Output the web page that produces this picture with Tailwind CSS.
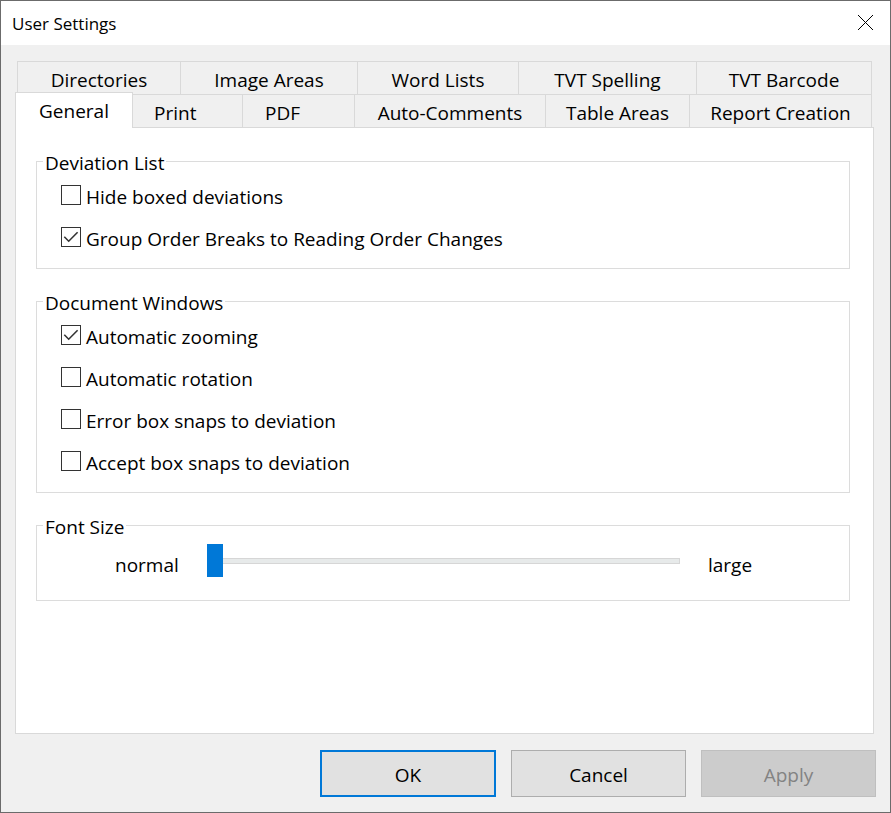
<!DOCTYPE html>
<html lang="en">
<head>
<meta charset="utf-8">
<title>User Settings</title>
<script src="https://cdn.jsdelivr.net/npm/@tailwindcss/browser@4"></script>
</head>
<body class="bg-[#f0f0f0] text-black font-['Open_Sans','Noto_Sans',sans-serif] text-[19px] leading-[26px]">
<div class="flex min-h-screen flex-col border border-[#6b6b6b]">
  <header class="flex h-11 items-center justify-between bg-white pl-[11px] pr-4">
    <h1 class="pt-[2px] text-[17px]">User Settings</h1>
    <button type="button" aria-label="Close" class="size-4">
      <svg viewBox="0 0 16 16" class="size-4" fill="none" stroke="#000" stroke-width="1"><path d="M0 0l15 15M15 0l-15 15"/></svg>
    </button>
  </header>

  <main class="flex flex-1 flex-col px-[14px] pt-4 pb-[15px]">
    <div role="tablist" aria-label="Settings pages" class="mr-1">
      <div class="ml-[2px] grid h-[33px] grid-cols-[163fr_177fr_161fr_178fr_175fr] border-r border-[#d9d9d9]">
        <button type="button" role="tab" class="border-t border-l border-[#d9d9d9] pt-1">Directories</button>
        <button type="button" role="tab" class="border-t border-l border-[#d9d9d9] pt-1">Image Areas</button>
        <button type="button" role="tab" class="border-t border-l border-[#d9d9d9] pt-1">Word Lists</button>
        <button type="button" role="tab" class="border-t border-l border-[#d9d9d9] pt-1">TVT Spelling</button>
        <button type="button" role="tab" class="border-t border-l border-[#d9d9d9] pt-1">TVT Barcode</button>
      </div>
      <div class="grid h-[33px] grid-cols-[118fr_109fr_112fr_191fr_144fr_182fr] border-r border-[#d9d9d9]">
        <button type="button" role="tab" aria-selected="true" aria-controls="general" class="z-10 -mt-[2px] -mb-px border-x border-t border-[#d9d9d9] bg-white pt-px">General</button>
        <button type="button" role="tab" class="border-t border-[#d9d9d9] pt-1 pl-[21px] text-left">Print</button>
        <button type="button" role="tab" class="border-t border-l border-[#d9d9d9] pt-1 pl-[22px] text-left">PDF</button>
        <button type="button" role="tab" class="border-t border-l border-[#d9d9d9] pt-1">Auto-Comments</button>
        <button type="button" role="tab" class="border-t border-l border-[#d9d9d9] pt-1">Table Areas</button>
        <button type="button" role="tab" class="border-t border-l border-[#d9d9d9] pt-1">Report Creation</button>
      </div>
    </div>

    <section id="general" role="tabpanel" aria-label="General" class="mr-[2px] flex flex-1 flex-col gap-[19px] border border-[#d9d9d9] bg-white pt-5 pr-[23px] pl-5">
      <fieldset class="border border-[#dcdcdc] pb-[10px] pl-6">
        <legend class="-ml-[18px] px-[2px] pt-1 leading-[22px]">Deviation List</legend>
        <label class="flex h-[42px] items-center gap-[5px]">
          <span class="grid"><input type="checkbox" class="peer col-start-1 row-start-1 size-5 appearance-none border border-[#333] bg-white"><svg viewBox="0 0 20 20" class="pointer-events-none col-start-1 row-start-1 hidden size-5 peer-checked:block" fill="none" stroke="#333" stroke-width="1.6"><path d="M3.300 9.800L7.700 14.200L16.600 5.300"/></svg></span>
          <span class="pt-[3px]">Hide boxed deviations</span>
        </label>
        <label class="flex h-[42px] items-center gap-[5px]">
          <span class="grid"><input type="checkbox" checked class="peer col-start-1 row-start-1 size-5 appearance-none border border-[#333] bg-white"><svg viewBox="0 0 20 20" class="pointer-events-none col-start-1 row-start-1 hidden size-5 peer-checked:block" fill="none" stroke="#333" stroke-width="1.6"><path d="M3.300 9.800L7.700 14.200L16.600 5.300"/></svg></span>
          <span class="pt-[3px]">Group Order Breaks to Reading Order Changes</span>
        </label>
      </fieldset>

      <fieldset class="border border-[#dcdcdc] pb-[10px] pl-6">
        <legend class="-ml-[18px] px-[2px] pt-1 leading-[22px]">Document Windows</legend>
        <label class="flex h-[42px] items-center gap-[5px]">
          <span class="grid"><input type="checkbox" checked class="peer col-start-1 row-start-1 size-5 appearance-none border border-[#333] bg-white"><svg viewBox="0 0 20 20" class="pointer-events-none col-start-1 row-start-1 hidden size-5 peer-checked:block" fill="none" stroke="#333" stroke-width="1.6"><path d="M3.300 9.800L7.700 14.200L16.600 5.300"/></svg></span>
          <span class="pt-[3px]">Automatic zooming</span>
        </label>
        <label class="flex h-[42px] items-center gap-[5px]">
          <span class="grid"><input type="checkbox" class="peer col-start-1 row-start-1 size-5 appearance-none border border-[#333] bg-white"><svg viewBox="0 0 20 20" class="pointer-events-none col-start-1 row-start-1 hidden size-5 peer-checked:block" fill="none" stroke="#333" stroke-width="1.6"><path d="M3.300 9.800L7.700 14.200L16.600 5.300"/></svg></span>
          <span class="pt-[3px]">Automatic rotation</span>
        </label>
        <label class="flex h-[42px] items-center gap-[5px]">
          <span class="grid"><input type="checkbox" class="peer col-start-1 row-start-1 size-5 appearance-none border border-[#333] bg-white"><svg viewBox="0 0 20 20" class="pointer-events-none col-start-1 row-start-1 hidden size-5 peer-checked:block" fill="none" stroke="#333" stroke-width="1.6"><path d="M3.300 9.800L7.700 14.200L16.600 5.300"/></svg></span>
          <span class="pt-[3px]">Error box snaps to deviation</span>
        </label>
        <label class="flex h-[42px] items-center gap-[5px]">
          <span class="grid"><input type="checkbox" class="peer col-start-1 row-start-1 size-5 appearance-none border border-[#333] bg-white"><svg viewBox="0 0 20 20" class="pointer-events-none col-start-1 row-start-1 hidden size-5 peer-checked:block" fill="none" stroke="#333" stroke-width="1.6"><path d="M3.300 9.800L7.700 14.200L16.600 5.300"/></svg></span>
          <span class="pt-[3px]">Accept box snaps to deviation</span>
        </label>
      </fieldset>

      <fieldset class="border border-[#dcdcdc] pb-4 pl-6">
        <legend class="-ml-[18px] px-[2px] pt-1 leading-[22px]">Font Size</legend>
        <div class="flex h-[46px] items-center pr-[97px] pl-[54px]">
          <label for="font-size" class="w-[92px] pt-2">normal</label>
          <input id="font-size" type="range" min="0" max="10" value="0" class="h-[34px] min-w-0 flex-1 appearance-none bg-transparent [&::-webkit-slider-runnable-track]:h-[6px] [&::-webkit-slider-runnable-track]:border [&::-webkit-slider-runnable-track]:border-[#d6d6d6] [&::-webkit-slider-runnable-track]:bg-[#e7eaea] [&::-webkit-slider-thumb]:-mt-[15px] [&::-webkit-slider-thumb]:-ml-px [&::-webkit-slider-thumb]:h-[33px] [&::-webkit-slider-thumb]:w-4 [&::-webkit-slider-thumb]:appearance-none [&::-webkit-slider-thumb]:bg-[#0078d7]">
          <span class="w-[72px] pt-2 pl-7">large</span>
        </div>
      </fieldset>
    </section>

    <footer class="mt-4 flex justify-end gap-[15px]">
      <button type="button" class="h-[47px] w-44 border-2 border-[#0078d7] bg-[#e1e1e1] pt-[2px]">OK</button>
      <button type="button" class="h-[47px] w-[175px] border border-[#adadad] bg-[#e1e1e1] pt-[2px]">Cancel</button>
      <button type="button" disabled class="h-[47px] w-[175px] border border-[#bfbfbf] bg-[#ccc] pt-[2px] text-[#838383]">Apply</button>
    </footer>
  </main>
</div>
</body>
</html>
